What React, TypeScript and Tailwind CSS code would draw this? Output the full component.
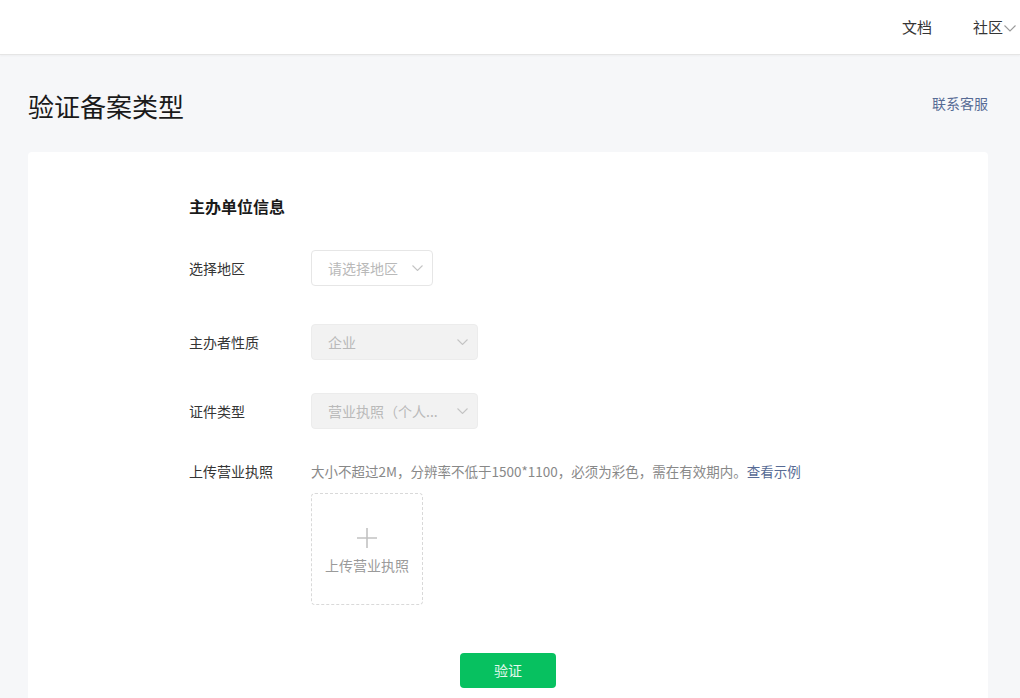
const font = { fontFamily: '"Noto Sans CJK SC", "Noto Sans", sans-serif' };

function Chevron({ className }: { className?: string }) {
  return (
    <svg width="11" height="6" viewBox="0 0 11 6" className={className}>
      <path d="M0.5 0.5l5 5 5-5" fill="none" stroke="currentColor" strokeWidth="1.1" />
    </svg>
  );
}

function Select({
  width,
  value,
  disabled,
}: {
  width: string;
  value: string;
  disabled?: boolean;
}) {
  return (
    <div
      className={`${width} h-9 flex items-center justify-between pl-4 pr-[9px] rounded border ${
        disabled ? "bg-[#f2f2f2] border-[#ececec]" : "bg-white border-[#e6e6e6]"
      }`}
    >
      <span className="text-[14px] text-[#b9b9b9] whitespace-nowrap">{value}</span>
      <Chevron className="text-[#c4c4c4]" />
    </div>
  );
}

export default function App() {
  return (
    <div className="min-h-[698px] bg-[#f6f7f9] text-[#353535]" style={font}>
      {/* Top bar */}
      <div className="h-[55px] bg-white border-b border-[#e5e5e5] shadow-[0_1px_2px_rgba(0,0,0,0.04)] flex items-center justify-end pr-[4px]">
        <span className="text-[15px] text-[#353535] mr-[41px]">文档</span>
        <span className="text-[15px] text-[#353535] flex items-center">
          社区
          <svg width="12" height="7" viewBox="0 0 12 7" className="ml-px mt-0.5 text-[#9a9a9a]">
            <path d="M0.5 0.5l5.5 5.5 5.5-5.5" fill="none" stroke="currentColor" strokeWidth="1.1" />
          </svg>
        </span>
      </div>

      {/* Page title */}
      <div className="flex items-center justify-between pl-[28px] pr-[32px] h-[97px]">
        <h1 className="text-[26px] text-[#1a1a1a] leading-none mt-1">验证备案类型</h1>
        <a className="text-[14px] text-[#576b95]">联系客服</a>
      </div>

      {/* Card */}
      <div className="ml-[28px] mr-[32px] bg-white rounded pt-[42px] pb-[20px]">
        <div className="pl-[161px]">
          <h2 className="text-[16px] font-semibold leading-6 text-[#1a1a1a]">主办单位信息</h2>

          <div className="flex items-center mt-[32px]">
            <div className="w-[122px] text-[14px]">选择地区</div>
            <Select width="w-[122px]" value="请选择地区" />
          </div>

          <div className="flex items-center mt-[38px]">
            <div className="w-[122px] text-[14px]">主办者性质</div>
            <Select width="w-[167px]" value="企业" disabled />
          </div>

          <div className="flex items-center mt-[33px]">
            <div className="w-[122px] text-[14px]">证件类型</div>
            <Select width="w-[167px]" value="营业执照（个人..." disabled />
          </div>

          <div className="flex mt-[31px]">
            <div className="w-[122px] text-[14px] leading-[22px]">上传营业执照</div>
            <div>
              <p className="text-[13.5px] leading-[22px] text-[#888888]">
                大小不超过2M，分辨率不低于1500*1100，必须为彩色，需在有效期内。
                <a className="text-[#576b95]">查看示例</a>
              </p>
              <div className="mt-[11px] w-[112px] h-[112px] border border-dashed border-[#d9d9d9] rounded flex flex-col items-center justify-center">
                <svg width="22" height="22" viewBox="0 0 22 22" className="mt-1">
                  <path d="M11 1v20M1 11h20" stroke="#c2c2c2" strokeWidth="1.6" />
                </svg>
                <span className="mt-[6px] text-[14px] text-[#9a9a9a]">上传营业执照</span>
              </div>
            </div>
          </div>
        </div>

        <div className="flex justify-center mt-[48px]">
          <button className="w-[96px] h-[35px] rounded bg-[#07c160] text-white/90 text-[14px]">
            验证
          </button>
        </div>
      </div>
    </div>
  );
}
